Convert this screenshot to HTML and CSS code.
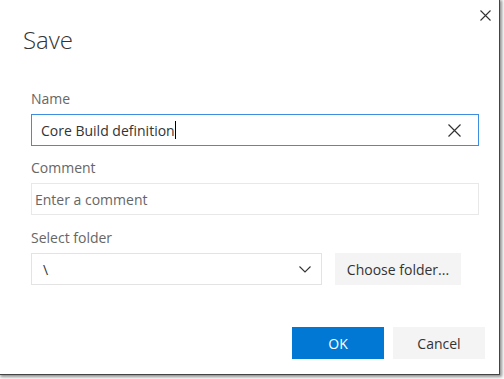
FILE: index.html
```html
<!DOCTYPE html>
<html>
<head>
<meta charset="utf-8">
<link rel="stylesheet" href="styles.css">
</head>
<body>
<div class="dialog">
  <div class="header">
    <h1 class="title">Save</h1>
    <button class="close" aria-label="Close">
      <svg width="11" height="11" viewBox="0 0 11 11"><path d="M0.5 0.5 L10.5 10.5 M10.5 0.5 L0.5 10.5" stroke="#333" stroke-width="1.1" fill="none"/></svg>
    </button>
  </div>
  <div class="form">
    <div class="field">
      <div class="label">Name</div>
      <div class="input focused">
        <span class="value">Core Build definition</span><span class="caret"></span>
        <span class="clear">
          <svg width="13" height="13" viewBox="0 0 13 13"><path d="M0.5 0.5 L12.5 12.5 M12.5 0.5 L0.5 12.5" stroke="#333" stroke-width="1.2" fill="none"/></svg>
        </span>
      </div>
    </div>
    <div class="field wide">
      <div class="label">Comment</div>
      <div class="input plain"><span class="placeholder">Enter a comment</span></div>
    </div>
    <div class="field">
      <div class="label">Select folder</div>
      <div class="row">
        <div class="input select">
          <span class="value">\</span>
          <svg class="chev" width="12" height="7" viewBox="0 0 12 7"><path d="M0.5 0.5 L6 6 L11.5 0.5" stroke="#333" stroke-width="1.1" fill="none"/></svg>
        </div>
        <button class="btn choose">Choose folder...</button>
      </div>
    </div>
  </div>
  <div class="footer">
    <button class="btn primary">OK</button>
    <button class="btn">Cancel</button>
  </div>
</div>
</body>
</html>
```
FILE: styles.css
```css
* { box-sizing: border-box; }
html, body { margin: 0; padding: 0; background: #fff; }
body {
  width: 504px;
  height: 379px;
  font-family: "Open Sans", "Noto Sans", sans-serif;
  overflow: hidden;
}
.dialog {
  width: 500px;
  height: 375px;
  background: #fff;
  border-right: 1px solid #444;
  border-bottom: 1px solid #444;
  box-shadow: 1px 1px 3px 1px rgba(0,0,0,0.45);
  display: flex;
  flex-direction: column;
}
.header {
  display: flex;
  justify-content: space-between;
  align-items: flex-start;
  padding-left: 23px;
}
.title {
  margin: 25px 0 0 0;
  font-size: 24px;
  line-height: 30px;
  font-weight: 300;
  color: #333;
}
.close {
  border: 0;
  background: none;
  padding: 0;
  margin: 10px 8px 0 0;
  width: 11px;
  height: 11px;
  display: flex;
}
.form {
  padding: 34px 0 0 31px;
  display: flex;
  flex-direction: column;
}
.field { margin-bottom: 12px; }
.field.wide { margin-bottom: 13px; }
.label {
  font-size: 14px;
  line-height: 20px;
  color: #666;
  margin-bottom: 5px;
}
.input {
  height: 32px;
  width: 448px;
  border: 1px solid #e8e8e8;
  display: flex;
  align-items: center;
  font-size: 14px;
  color: #333;
}
.focused {
  border-color: #3d8ee0;
  padding-left: 9px;
}
.caret {
  width: 1px;
  height: 18px;
  background: #000;
  margin-left: 0;
}
.clear {
  margin-left: auto;
  margin-right: 17px;
  display: flex;
}
.plain { padding-left: 3px; }
.placeholder { color: #666; }
.row { display: flex; gap: 13px; }
.select {
  width: 291px;
  padding: 0 10px 0 11px;
  border-color: #e3e3e3;
}
.chev { margin-left: auto; }
.btn {
  font-family: inherit;
  font-size: 14px;
  color: #333;
  background: #f4f4f4;
  border: 0;
  height: 32px;
  width: 92px;
  padding: 0;
}
.choose { width: 126px; }
.footer {
  display: flex;
  justify-content: flex-end;
  gap: 9px;
  padding-right: 14px;
  margin-top: 30px;
}
.primary { background: #0078d4; color: #fff; }
```
